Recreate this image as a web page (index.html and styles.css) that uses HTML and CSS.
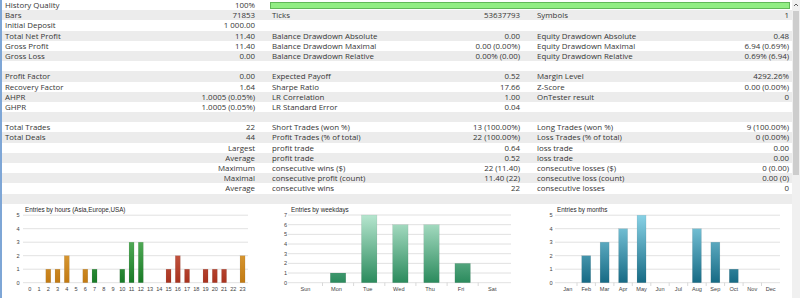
FILE: index.html
```html
<!DOCTYPE html>
<html>
<head>
<meta charset="utf-8">
<link rel="stylesheet" href="styles.css">
</head>
<body>
<div class="window">
  <div class="main">
    <div class="stats">
      <div class="row"><div class="grp g1"><span class="lbl">History Quality</span><span class="val">100%</span></div><div class="quality"><div class="qbar"></div></div></div>
      <div class="row"><div class="grp g1"><span class="lbl">Bars</span><span class="val">71853</span></div><div class="grp g2"><span class="lbl">Ticks</span><span class="val">53637793</span></div><div class="grp g3"><span class="lbl">Symbols</span><span class="val">1</span></div></div>
      <div class="row"><div class="grp g1"><span class="lbl">Initial Deposit</span><span class="val">1 000.00</span></div><div class="grp g2"></div><div class="grp g3"></div></div>
      <div class="row"><div class="grp g1"><span class="lbl">Total Net Profit</span><span class="val">11.40</span></div><div class="grp g2"><span class="lbl">Balance Drawdown Absolute</span><span class="val">0.00</span></div><div class="grp g3"><span class="lbl">Equity Drawdown Absolute</span><span class="val">0.48</span></div></div>
      <div class="row"><div class="grp g1"><span class="lbl">Gross Profit</span><span class="val">11.40</span></div><div class="grp g2"><span class="lbl">Balance Drawdown Maximal</span><span class="val">0.00 (0.00%)</span></div><div class="grp g3"><span class="lbl">Equity Drawdown Maximal</span><span class="val">6.94 (0.69%)</span></div></div>
      <div class="row"><div class="grp g1"><span class="lbl">Gross Loss</span><span class="val">0.00</span></div><div class="grp g2"><span class="lbl">Balance Drawdown Relative</span><span class="val">0.00% (0.00)</span></div><div class="grp g3"><span class="lbl">Equity Drawdown Relative</span><span class="val">0.69% (6.94)</span></div></div>
      <div class="row"></div>
      <div class="row"><div class="grp g1"><span class="lbl">Profit Factor</span><span class="val">0.00</span></div><div class="grp g2"><span class="lbl">Expected Payoff</span><span class="val">0.52</span></div><div class="grp g3"><span class="lbl">Margin Level</span><span class="val">4292.26%</span></div></div>
      <div class="row"><div class="grp g1"><span class="lbl">Recovery Factor</span><span class="val">1.64</span></div><div class="grp g2"><span class="lbl">Sharpe Ratio</span><span class="val">17.66</span></div><div class="grp g3"><span class="lbl">Z-Score</span><span class="val">0.00 (0.00%)</span></div></div>
      <div class="row"><div class="grp g1"><span class="lbl">AHPR</span><span class="val">1.0005 (0.05%)</span></div><div class="grp g2"><span class="lbl">LR Correlation</span><span class="val">1.00</span></div><div class="grp g3"><span class="lbl">OnTester result</span><span class="val">0</span></div></div>
      <div class="row"><div class="grp g1"><span class="lbl">GHPR</span><span class="val">1.0005 (0.05%)</span></div><div class="grp g2"><span class="lbl">LR Standard Error</span><span class="val">0.04</span></div><div class="grp g3"></div></div>
      <div class="row"></div>
      <div class="row"><div class="grp g1"><span class="lbl">Total Trades</span><span class="val">22</span></div><div class="grp g2"><span class="lbl">Short Trades (won %)</span><span class="val">13 (100.00%)</span></div><div class="grp g3"><span class="lbl">Long Trades (won %)</span><span class="val">9 (100.00%)</span></div></div>
      <div class="row"><div class="grp g1"><span class="lbl">Total Deals</span><span class="val">44</span></div><div class="grp g2"><span class="lbl">Profit Trades (% of total)</span><span class="val">22 (100.00%)</span></div><div class="grp g3"><span class="lbl">Loss Trades (% of total)</span><span class="val">0 (0.00%)</span></div></div>
      <div class="row"><div class="grp g1"><span class="lbl"></span><span class="val">Largest</span></div><div class="grp g2"><span class="lbl">profit trade</span><span class="val">0.64</span></div><div class="grp g3"><span class="lbl">loss trade</span><span class="val">0.00</span></div></div>
      <div class="row"><div class="grp g1"><span class="lbl"></span><span class="val">Average</span></div><div class="grp g2"><span class="lbl">profit trade</span><span class="val">0.52</span></div><div class="grp g3"><span class="lbl">loss trade</span><span class="val">0.00</span></div></div>
      <div class="row"><div class="grp g1"><span class="lbl"></span><span class="val">Maximum</span></div><div class="grp g2"><span class="lbl">consecutive wins ($)</span><span class="val">22 (11.40)</span></div><div class="grp g3"><span class="lbl">consecutive losses ($)</span><span class="val">0 (0.00)</span></div></div>
      <div class="row"><div class="grp g1"><span class="lbl"></span><span class="val">Maximal</span></div><div class="grp g2"><span class="lbl">consecutive profit (count)</span><span class="val">11.40 (22)</span></div><div class="grp g3"><span class="lbl">consecutive loss (count)</span><span class="val">0.00 (0)</span></div></div>
      <div class="row"><div class="grp g1"><span class="lbl"></span><span class="val">Average</span></div><div class="grp g2"><span class="lbl">consecutive wins</span><span class="val">22</span></div><div class="grp g3"><span class="lbl">consecutive losses</span><span class="val">0</span></div></div>
      <div class="row"></div>
    </div>
    <div class="charts">
      <svg class="chart c1" width="261" height="94" viewBox="0 0 261 94">
        <defs>
          <linearGradient id="gOr" gradientUnits="userSpaceOnUse" x1="0" y1="11" x2="0" y2="79"><stop offset="0" stop-color="#f3bd5c"/><stop offset="1" stop-color="#c27a12"/></linearGradient>
          <linearGradient id="gGr" gradientUnits="userSpaceOnUse" x1="0" y1="11" x2="0" y2="79"><stop offset="0" stop-color="#74c874"/><stop offset="1" stop-color="#187a26"/></linearGradient>
          <linearGradient id="gRd" gradientUnits="userSpaceOnUse" x1="0" y1="11" x2="0" y2="79"><stop offset="0" stop-color="#e6806c"/><stop offset="1" stop-color="#a8321e"/></linearGradient>
        </defs>
        <text class="ctitle" x="23" y="8">Entries by hours (Asia,Europe,USA)</text>
        <g class="grid">
          <line x1="21" x2="246" y1="78.7" y2="78.7"/><line x1="21" x2="246" y1="65.2" y2="65.2"/><line x1="21" x2="246" y1="51.7" y2="51.7"/><line x1="21" x2="246" y1="38.2" y2="38.2"/><line x1="21" x2="246" y1="24.7" y2="24.7"/><line x1="21" x2="246" y1="11.2" y2="11.2"/>
        </g>
        <g class="ylab">
          <text x="17.5" y="80.7">0</text><text x="17.5" y="67.2">1</text><text x="17.5" y="53.7">2</text><text x="17.5" y="40.2">3</text><text x="17.5" y="26.7">4</text><text x="17.5" y="13.2">5</text>
        </g>
        <g class="bars">
          <rect x="43.8" y="65.2" width="5" height="13.5" fill="url(#gOr)"/>
          <rect x="53.05" y="65.2" width="5" height="13.5" fill="url(#gOr)"/>
          <rect x="62.3" y="51.7" width="5" height="27" fill="url(#gOr)"/>
          <rect x="80.8" y="65.2" width="5" height="13.5" fill="url(#gOr)"/>
          <rect x="90.05" y="65.2" width="5" height="13.5" fill="url(#gGr)"/>
          <rect x="117.8" y="65.2" width="5" height="13.5" fill="url(#gGr)"/>
          <rect x="127.05" y="38.2" width="5" height="40.5" fill="url(#gGr)"/>
          <rect x="136.3" y="38.2" width="5" height="40.5" fill="url(#gGr)"/>
          <rect x="164.05" y="65.2" width="5" height="13.5" fill="url(#gRd)"/>
          <rect x="173.3" y="51.7" width="5" height="27" fill="url(#gRd)"/>
          <rect x="182.55" y="65.2" width="5" height="13.5" fill="url(#gRd)"/>
          <rect x="201.05" y="65.2" width="5" height="13.5" fill="url(#gRd)"/>
          <rect x="210.3" y="65.2" width="5" height="13.5" fill="url(#gRd)"/>
          <rect x="219.55" y="65.2" width="5" height="13.5" fill="url(#gRd)"/>
          <rect x="238.05" y="51.7" width="5" height="27" fill="url(#gOr)"/>
        </g>
        <g class="xlab">
          <text x="27.8" y="87">0</text><text x="37.05" y="87">1</text><text x="46.3" y="87">2</text><text x="55.55" y="87">3</text><text x="64.8" y="87">4</text><text x="74.05" y="87">5</text><text x="83.3" y="87">6</text><text x="92.55" y="87">7</text><text x="101.8" y="87">8</text><text x="111.05" y="87">9</text><text x="120.3" y="87">10</text><text x="129.55" y="87">11</text><text x="138.8" y="87">12</text><text x="148.05" y="87">13</text><text x="157.3" y="87">14</text><text x="166.55" y="87">15</text><text x="175.8" y="87">16</text><text x="185.05" y="87">17</text><text x="194.3" y="87">18</text><text x="203.55" y="87">19</text><text x="212.8" y="87">20</text><text x="222.05" y="87">21</text><text x="231.3" y="87">22</text><text x="240.55" y="87">23</text>
        </g>
        <text class="ctitle next" x="23" y="98.5">Profits and losses by hours</text>
      </svg>
      <svg class="chart c2" width="265" height="94" viewBox="0 0 265 94">
        <defs>
          <linearGradient id="gWk" gradientUnits="userSpaceOnUse" x1="0" y1="11" x2="0" y2="79"><stop offset="0" stop-color="#b6e6cf"/><stop offset="1" stop-color="#2a8a5c"/></linearGradient>
        </defs>
        <text class="ctitle" x="28" y="8">Entries by weekdays</text>
        <g class="grid">
          <line x1="25" x2="248" y1="78.7" y2="78.7"/><line x1="25" x2="248" y1="69.03" y2="69.03"/><line x1="25" x2="248" y1="59.36" y2="59.36"/><line x1="25" x2="248" y1="49.69" y2="49.69"/><line x1="25" x2="248" y1="40.02" y2="40.02"/><line x1="25" x2="248" y1="30.35" y2="30.35"/><line x1="25" x2="248" y1="20.68" y2="20.68"/><line x1="25" x2="248" y1="11.01" y2="11.01"/>
        </g>
        <g class="ticks">
          <line x1="59.5" x2="59.5" y1="78.7" y2="82"/><line x1="90.6" x2="90.6" y1="78.7" y2="82"/><line x1="121.8" x2="121.8" y1="78.7" y2="82"/><line x1="152.9" x2="152.9" y1="78.7" y2="82"/><line x1="184.1" x2="184.1" y1="78.7" y2="82"/><line x1="215.2" x2="215.2" y1="78.7" y2="82"/>
        </g>
        <g class="ylab">
          <text x="24" y="80.7">0</text><text x="24" y="71">1</text><text x="24" y="61.4">2</text><text x="24" y="51.7">3</text><text x="24" y="42">4</text><text x="24" y="32.4">5</text><text x="24" y="22.7">6</text><text x="24" y="13">7</text>
        </g>
        <g class="bars">
          <rect x="67.3" y="69.03" width="15.5" height="9.67" fill="url(#gWk)"/>
          <rect x="98.45" y="11.01" width="15.5" height="67.69" fill="url(#gWk)"/>
          <rect x="129.6" y="20.68" width="15.5" height="58.02" fill="url(#gWk)"/>
          <rect x="160.75" y="20.68" width="15.5" height="58.02" fill="url(#gWk)"/>
          <rect x="191.9" y="59.36" width="15.5" height="19.34" fill="url(#gWk)"/>
        </g>
        <g class="xlab">
          <text x="42.5" y="87">Sun</text><text x="73.5" y="87">Mon</text><text x="104.7" y="87">Tue</text><text x="135.8" y="87">Wed</text><text x="167" y="87">Thu</text><text x="198" y="87">Fri</text><text x="229.3" y="87">Sat</text>
        </g>
        <text class="ctitle next" x="28" y="98.5">Profits and losses by weekdays</text>
      </svg>
      <svg class="chart c3" width="264" height="94" viewBox="0 0 264 94">
        <defs>
          <linearGradient id="gMo" gradientUnits="userSpaceOnUse" x1="0" y1="11" x2="0" y2="79"><stop offset="0" stop-color="#88d2e6"/><stop offset="1" stop-color="#166a84"/></linearGradient>
        </defs>
        <text class="ctitle" x="29" y="8">Entries by months</text>
        <g class="grid">
          <line x1="27" x2="252" y1="78.7" y2="78.7"/><line x1="27" x2="252" y1="65.2" y2="65.2"/><line x1="27" x2="252" y1="51.7" y2="51.7"/><line x1="27" x2="252" y1="38.2" y2="38.2"/><line x1="27" x2="252" y1="24.7" y2="24.7"/><line x1="27" x2="252" y1="11.2" y2="11.2"/>
        </g>
        <g class="ticks">
          <line x1="49" x2="49" y1="78.7" y2="82"/><line x1="67.4" x2="67.4" y1="78.7" y2="82"/><line x1="85.9" x2="85.9" y1="78.7" y2="82"/><line x1="104.3" x2="104.3" y1="78.7" y2="82"/><line x1="122.8" x2="122.8" y1="78.7" y2="82"/><line x1="141.2" x2="141.2" y1="78.7" y2="82"/><line x1="159.7" x2="159.7" y1="78.7" y2="82"/><line x1="178.2" x2="178.2" y1="78.7" y2="82"/><line x1="196.6" x2="196.6" y1="78.7" y2="82"/><line x1="215.1" x2="215.1" y1="78.7" y2="82"/><line x1="233.5" x2="233.5" y1="78.7" y2="82"/>
        </g>
        <g class="ylab">
          <text x="24.7" y="80.7">0</text><text x="24.7" y="67.2">1</text><text x="24.7" y="53.7">2</text><text x="24.7" y="40.2">3</text><text x="24.7" y="26.7">4</text><text x="24.7" y="13.2">5</text>
        </g>
        <g class="bars">
          <rect x="53.7" y="51.7" width="9" height="27" fill="url(#gMo)"/>
          <rect x="72.15" y="38.2" width="9" height="40.5" fill="url(#gMo)"/>
          <rect x="90.6" y="24.7" width="9" height="54" fill="url(#gMo)"/>
          <rect x="109.05" y="11.2" width="9" height="67.5" fill="url(#gMo)"/>
          <rect x="164.4" y="24.7" width="9" height="54" fill="url(#gMo)"/>
          <rect x="182.85" y="38.2" width="9" height="40.5" fill="url(#gMo)"/>
          <rect x="201.3" y="65.2" width="9" height="13.5" fill="url(#gMo)"/>
        </g>
        <g class="xlab">
          <text x="39.75" y="87">Jan</text><text x="58.2" y="87">Feb</text><text x="76.65" y="87">Mar</text><text x="95.1" y="87">Apr</text><text x="113.55" y="87">May</text><text x="132" y="87">Jun</text><text x="150.45" y="87">Jul</text><text x="168.9" y="87">Aug</text><text x="187.35" y="87">Sep</text><text x="205.8" y="87">Oct</text><text x="224.25" y="87">Nov</text><text x="242.7" y="87">Dec</text>
        </g>
        <text class="ctitle next" x="29" y="98.5">Profits and losses by months</text>
      </svg>
    </div>
  </div>
  <div class="scrollbar">
    <svg class="arrow" width="8" height="8" viewBox="0 0 8 8"><path d="M2 5 L4 3 L6 5" fill="none" stroke="#606060" stroke-width="1"/></svg>
    <div class="thumb"></div>
  </div>
</div>
</body>
</html>
```
FILE: styles.css
```css
html, body {
  margin: 0;
  padding: 0;
  background: #ffffff;
  overflow: hidden;
}
.window {
  display: flex;
  width: 800px;
  height: 298px;
  overflow: hidden;
}
.main {
  width: 790px;
  border-left: 2px solid #7ea6d6;
  display: flex;
  flex-direction: column;
}
.stats {
  display: flex;
  flex-direction: column;
  font-family: "Open Sans", "Noto Sans", sans-serif;
  font-size: 7.9px;
  color: #363636;
}
.row {
  display: flex;
  height: 10.2px;
  line-height: 11px;
  white-space: nowrap;
}
.row:nth-child(even) {
  background: #ececec;
}
.grp {
  display: flex;
  justify-content: space-between;
  box-sizing: border-box;
}
.g1 { width: 261px; padding-left: 3px; padding-right: 8px; }
.g2 { width: 265px; padding-left: 9px; padding-right: 8px; }
.g3 { width: 264px; padding-left: 9px; padding-right: 3px; }
.val { text-align: right; }
.quality {
  flex: 1;
  display: flex;
  align-items: center;
  padding-left: 7px;
  padding-right: 2px;
}
.qbar {
  flex: 1;
  height: 5px;
  background: #92ee84;
  border: 1px solid #62b85a;
}
.charts {
  display: flex;
  flex: 1;
  background: #ffffff;
}
.chart {
  display: block;
  overflow: hidden;
}
.ctitle {
  font-family: "Liberation Sans", Arial, sans-serif;
  font-size: 6.3px;
  fill: #2a2a2a;
}
.grid line {
  stroke: #d9d9d9;
  stroke-width: 0.8;
}
.ticks line {
  stroke: #cfcfcf;
  stroke-width: 0.8;
}
.ylab text {
  font-family: "Liberation Sans", Arial, sans-serif;
  font-size: 5.6px;
  fill: #444444;
  text-anchor: end;
}
.xlab text {
  font-family: "Liberation Sans", Arial, sans-serif;
  font-size: 5.6px;
  fill: #444444;
  text-anchor: middle;
}
.bars rect {
  stroke: rgba(0, 0, 0, 0.12);
  stroke-width: 0.5;
}
.scrollbar {
  width: 8px;
  background: #f0f0f0;
  display: flex;
  flex-direction: column;
  align-items: center;
}
.arrow {
  display: block;
  margin-top: 1px;
}
.thumb {
  width: 6px;
  height: 164px;
  margin-top: 2px;
  background: #cdcdcd;
}
```
